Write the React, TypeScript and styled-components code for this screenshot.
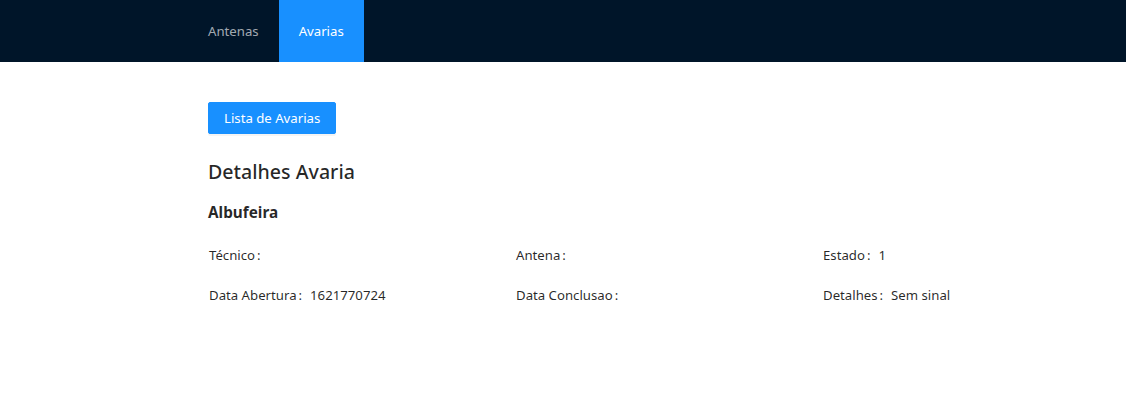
import styled, { createGlobalStyle } from 'styled-components';

const GlobalStyle = createGlobalStyle`
	body {
		margin: 0;
		background: #fff;
		font-family: 'Segoe UI', 'Noto Sans', 'Liberation Sans', sans-serif;
		font-size: 13.2px;
		color: rgba(0, 0, 0, 0.85);
	}
`;

const menuItems = [
	{ label: 'Antenas', selected: false },
	{ label: 'Avarias', selected: true },
];

const details = [
	{ label: 'Técnico', value: '' },
	{ label: 'Antena', value: '' },
	{ label: 'Estado', value: '1' },
	{ label: 'Data Abertura', value: '1621770724' },
	{ label: 'Data Conclusao', value: '' },
	{ label: 'Detalhes', value: 'Sem sinal' },
];

export default function App() {
	return (
		<>
			<GlobalStyle />
			<Header>
				<Menu>
					{menuItems.map((item) => (
						<MenuItem key={item.label} selected={item.selected}>
							{item.label}
						</MenuItem>
					))}
				</Menu>
			</Header>
			<Content>
				<PrimaryButton>Lista de Avarias</PrimaryButton>
				<Title>Detalhes Avaria</Title>
				<DescTitle>Albufeira</DescTitle>
				<DescGrid>
					{details.map((d) => (
						<DescItem key={d.label}>
							<Label>{d.label}</Label>
							<Value>{d.value}</Value>
						</DescItem>
					))}
				</DescGrid>
			</Content>
		</>
	);
}

const Header = styled.header`
	height: 62px;
	background: #001529;
	padding-left: 188px;
	display: flex;
`;

const Menu = styled.nav`
	display: flex;
	height: 100%;
`;

const MenuItem = styled.div<{ selected: boolean }>`
	padding: 0 20px;
	display: flex;
	align-items: center;
	font-size: 13.2px;
	color: ${({ selected }) => (selected ? '#fff' : 'rgba(255, 255, 255, 0.65)')};
	background: ${({ selected }) => (selected ? '#1890ff' : 'transparent')};
`;

const Content = styled.main`
	padding: 40px 0 0 208px;
	display: flex;
	flex-direction: column;
	align-items: flex-start;
`;

const PrimaryButton = styled.button`
	height: 32px;
	padding: 4px 15px;
	border: 1px solid #1890ff;
	border-radius: 2px;
	background: #1890ff;
	color: #fff;
	font-family: inherit;
	font-size: 13.2px;
	box-shadow: 0 2px 0 rgba(0, 0, 0, 0.045);
`;

const Title = styled.h2`
	margin: 24px 0 0;
	font-size: 19.6px;
	font-weight: 500;
	line-height: 28px;
	color: rgba(0, 0, 0, 0.85);
`;

const DescTitle = styled.div`
	margin-top: 14px;
	font-size: 15.3px;
	font-weight: 700;
	line-height: 24px;
`;

const DescGrid = styled.div`
	margin-top: 20px;
	display: grid;
	grid-template-columns: 307px 307px 300px;
	grid-auto-rows: 40px;
	align-self: stretch;
`;

const DescItem = styled.div`
	display: flex;
	line-height: 22px;
	font-size: 13.2px;
	padding-left: 1px;
`;

const Label = styled.span`
	color: rgba(0, 0, 0, 0.85);
	&::after {
		content: ':';
		margin: 0 8px 0 2px;
	}
`;

const Value = styled.span`
	color: rgba(0, 0, 0, 0.85);
`;
